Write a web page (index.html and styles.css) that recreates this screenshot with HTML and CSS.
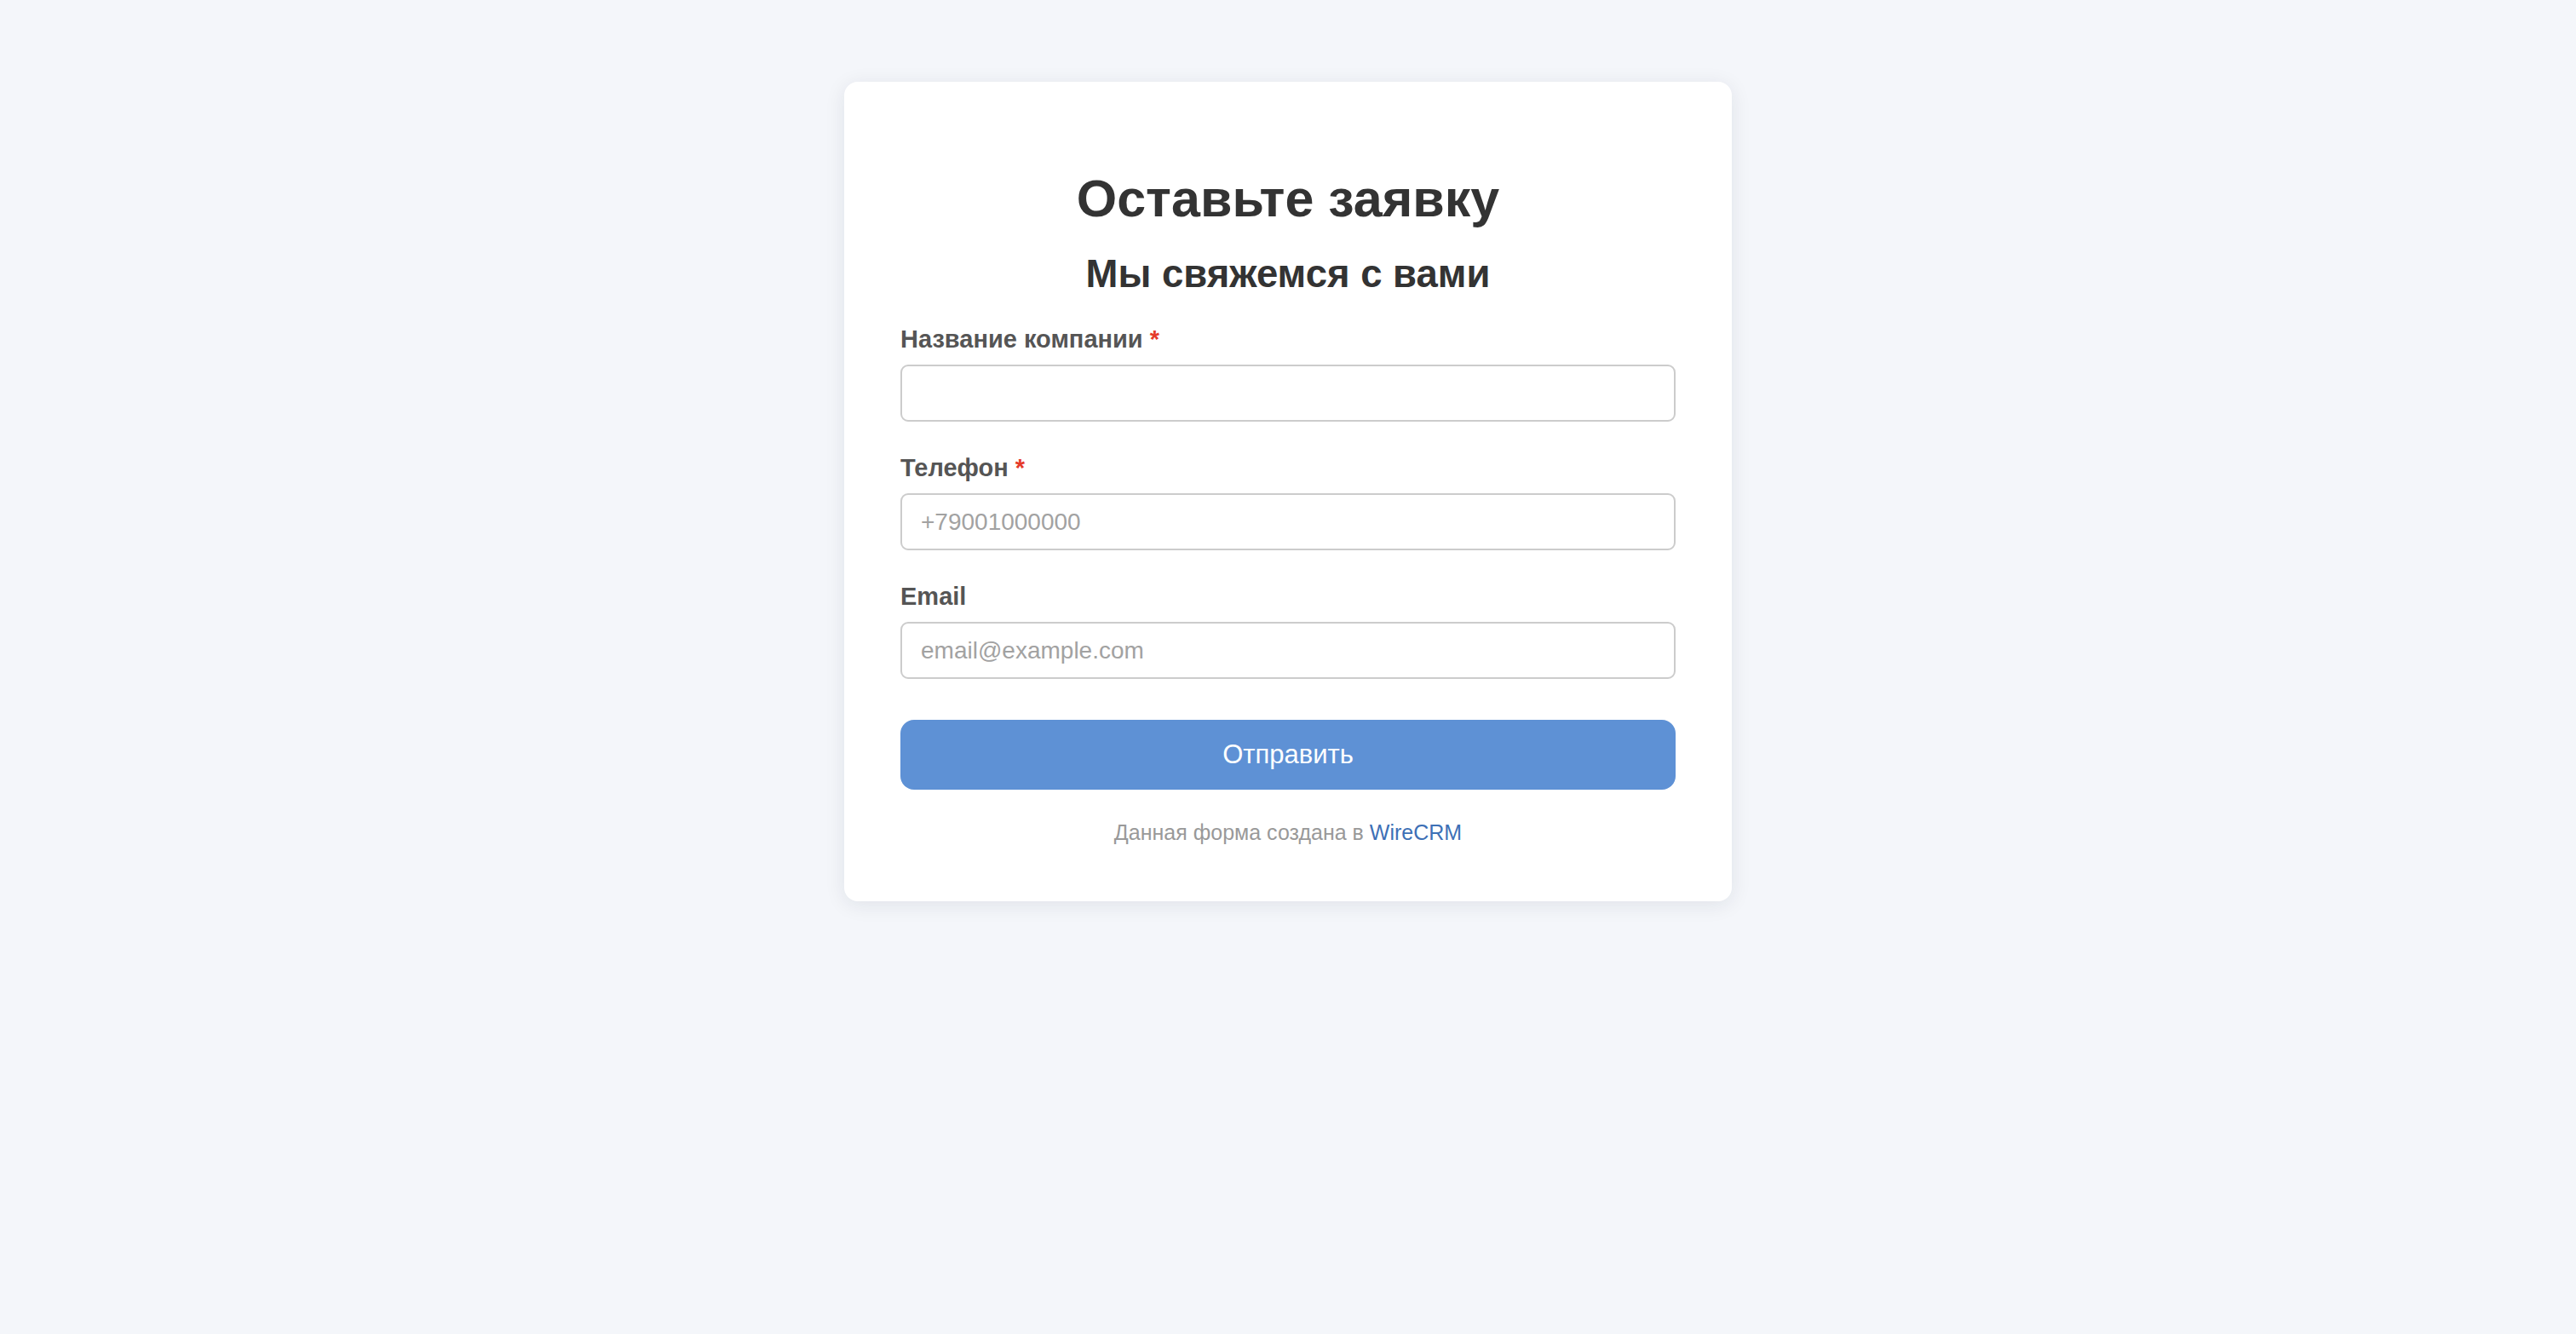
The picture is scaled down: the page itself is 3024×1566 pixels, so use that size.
FILE: index.html
```html
<!DOCTYPE html>
<html lang="ru">

<head>
    <meta charset="UTF-8">
    <meta name="viewport" content="width=device-width, initial-scale=1.0">
    <title>Оставьте заявку</title>
    <link rel="stylesheet" href="styles.css">
</head>

<body>
    <div class="container">
        <form class="form" onsubmit="return false">
            <h1>Оставьте заявку</h1>
            <h2>Мы свяжемся с вами</h2>

            <div class="field">
                <label for="company">Название компании <span class="required">*</span></label>
                <input type="text" id="company" name="company">
            </div>

            <div class="field">
                <label for="phone">Телефон <span class="required">*</span></label>
                <input type="tel" id="phone" name="phone" placeholder="+79001000000">
            </div>

            <div class="field">
                <label for="email">Email</label>
                <input type="email" id="email" name="email" placeholder="email@example.com">
            </div>

            <button type="submit">Отправить</button>

            <div class="footer">Данная форма создана в <a href="#">WireCRM</a></div>
        </form>
    </div>
</body>

</html>
```

FILE: styles.css
```css
body {
    font-family: 'Liberation Sans', Arial, Helvetica, sans-serif;
    background-color: #f4f6fa;
    margin: 0;
    padding: 96px 0 0;
    min-height: 100vh;
    box-sizing: border-box;
}

.container {
    width: 1042px;
    margin: 0 auto;
    box-sizing: border-box;
    background-color: #fff;
    border-radius: 16px;
    box-shadow: 0 4px 24px rgba(20, 30, 60, 0.09);
    padding: 64px 66px 67px;
}

h1 {
    font-size: 61px;
    line-height: 72px;
    font-weight: bold;
    color: #333;
    text-align: center;
    margin: 37px 0 0;
}

h2 {
    font-size: 45.5px;
    line-height: 54px;
    font-weight: bold;
    color: #333;
    text-align: center;
    margin: 26px 0 0;
}

.field {
    margin-top: 33px;
}

.field + .field {
    margin-top: 38px;
}

label {
    display: block;
    font-size: 29px;
    line-height: 32px;
    font-weight: bold;
    color: #555;
    margin-bottom: 14px;
}

.required {
    color: #e53a2a;
}

input {
    display: block;
    width: 100%;
    height: 67px;
    box-sizing: border-box;
    border: 2px solid #ccc;
    border-radius: 9px;
    padding: 0 22px;
    font-family: inherit;
    font-size: 28px;
    color: #333;
    background-color: #fff;
    outline: none;
}

input::placeholder {
    color: #a2a2a2;
}

button {
    display: block;
    width: 100%;
    height: 82px;
    margin-top: 48px;
    font-family: inherit;
    font-size: 31px;
    color: #fff;
    background-color: #5e91d5;
    border: none;
    border-radius: 16px;
    cursor: pointer;
}

.footer {
    margin-top: 36px;
    font-size: 25px;
    line-height: 28px;
    color: #999;
    text-align: center;
}

.footer a {
    color: #3d70b6;
    text-decoration: none;
}
```
